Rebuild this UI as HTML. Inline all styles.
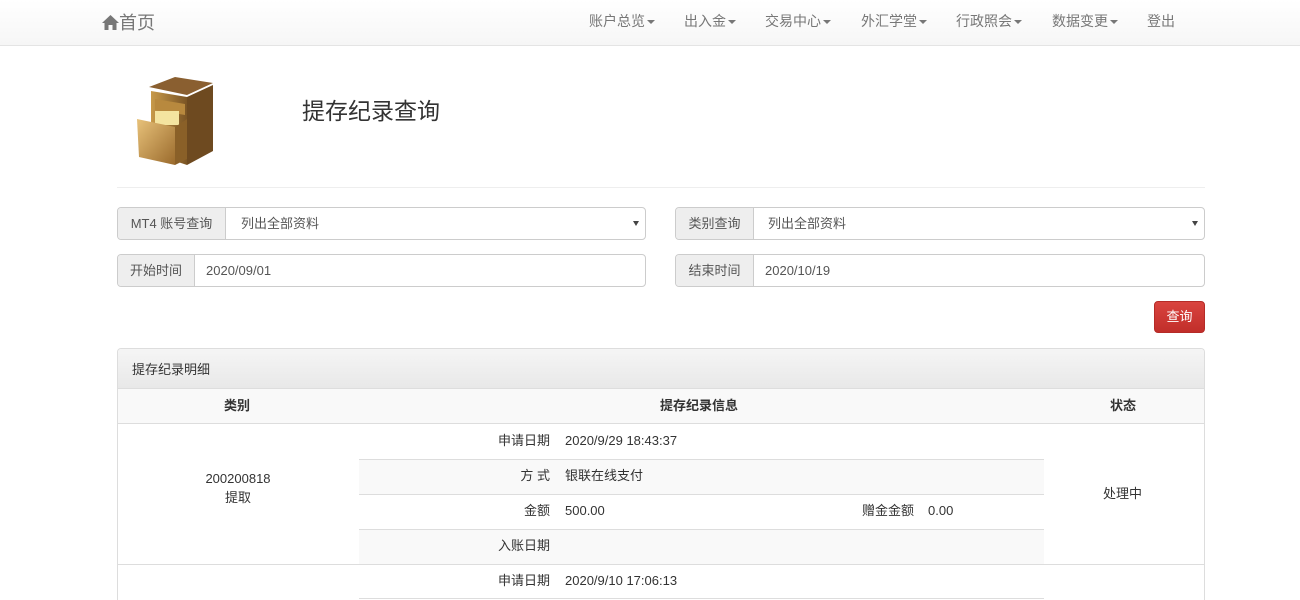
<!DOCTYPE html>
<html style="width:1300px;height:600px;overflow:hidden"><head><meta charset="utf-8"><style>
*{box-sizing:border-box;margin:0;padding:0}
body{width:1300px;height:600px;overflow:hidden;background:#fff;font-family:"Liberation Sans","Noto Sans CJK SC",sans-serif;font-size:13px;color:#333;position:relative}
.a{position:absolute}
.nav{left:0;top:0;width:1300px;height:46px;background:linear-gradient(#fff,#f6f6f6);border-bottom:1px solid #e4e4e4}
.nav span{position:absolute;top:11px;font-size:14px;color:#777;white-space:nowrap}
.car{display:inline-block;width:0;height:0;border-left:4px solid transparent;border-right:4px solid transparent;border-top:4px solid #777;vertical-align:middle;margin-left:2px}
.ig{height:33px;border:1px solid #ccc;border-radius:4px;background:#fff;overflow:hidden}
.ig .ad{position:absolute;left:0;top:0;bottom:0;background:#eee;border-right:1px solid #ccc;color:#555;line-height:31px;text-align:center}
.ig .v{position:absolute;top:0;line-height:31px;color:#555}
.ig .arr{position:absolute;right:6px;top:13px;border-left:3px solid transparent;border-right:3px solid transparent;border-top:5px solid #444}
.bd{border-top:1px solid #ddd}
</style></head><body>
<div class="a nav">
<span style="left:102px;top:9px;font-size:18px;color:#777"><svg width="17" height="15" viewBox="0 0 17 15" style="vertical-align:-1px"><path d="M8.5 0 L17 8 H14.5 V15 H10.5 V10 H6.5 V15 H2.5 V8 H0 Z" fill="#777"/></svg>首页</span>
<span style="left:589px">账户总览<i class="car"></i></span>
<span style="left:684px">出入金<i class="car"></i></span>
<span style="left:765px">交易中心<i class="car"></i></span>
<span style="left:861px">外汇学堂<i class="car"></i></span>
<span style="left:956px">行政照会<i class="car"></i></span>
<span style="left:1052px">数据变更<i class="car"></i></span>
<span style="left:1147px">登出</span>
</div>
<svg class="a" style="left:135px;top:75px" width="82" height="92" viewBox="0 0 82 92">
<defs><linearGradient id="g1" x1="0" x2="1"><stop offset="0" stop-color="#c89a4a"/><stop offset="1" stop-color="#7a5424"/></linearGradient>
<linearGradient id="g2" x1="0" x2="1" y1="0" y2="1"><stop offset="0" stop-color="#e8c27a"/><stop offset="1" stop-color="#9a6a2c"/></linearGradient></defs>
<path d="M14 12 L40 2 L78 8 L52 20 Z" fill="#8a5f30"/>
<path d="M16 16 L52 22 L52 90 L16 78 Z" fill="url(#g1)"/>
<path d="M52 22 L78 10 L78 76 L52 90 Z" fill="#6e4a20"/>
<path d="M20 24 L50 29 L50 40 L20 35 Z" fill="#b8893e"/>
<rect x="20" y="36" width="24" height="14" fill="#f4e4a0"/>
<path d="M2 44 L40 52 L40 90 L4 82 Z" fill="url(#g2)"/>
<path d="M40 52 L52 44 L52 84 L40 90 Z" fill="#8a6028"/>
</svg>
<div class="a" style="left:302px;top:92px;font-size:23px;color:#333">提存纪录查询</div>
<div class="a" style="left:117px;top:187px;width:1088px;height:1px;background:#eee"></div>

<div class="a ig" style="left:117px;top:207px;width:529px"><div class="ad" style="width:108px">MT4 账号查询</div><div class="v" style="left:123px">列出全部资料</div><i class="arr"></i></div>
<div class="a ig" style="left:675px;top:207px;width:530px"><div class="ad" style="width:78px">类别查询</div><div class="v" style="left:92px">列出全部资料</div><i class="arr"></i></div>
<div class="a ig" style="left:117px;top:254px;width:529px"><div class="ad" style="width:77px">开始时间</div><div class="v" style="left:88px">2020/09/01</div></div>
<div class="a ig" style="left:675px;top:254px;width:530px"><div class="ad" style="width:78px">结束时间</div><div class="v" style="left:89px">2020/10/19</div></div>
<div class="a" style="left:1154px;top:301px;width:51px;height:32px;border-radius:4px;background:linear-gradient(#d9443f,#c12e2a);border:1px solid #b52b27;color:#fff;text-align:center;line-height:30px">查询</div>

<div class="a" style="left:117px;top:348px;width:1088px;height:252px;border:1px solid #ddd;border-bottom:none;border-radius:4px 4px 0 0;overflow:hidden">
<div class="a" style="left:0;top:0;width:1088px;height:40px;background:linear-gradient(#f5f5f5,#e8e8e8);border-bottom:1px solid #ddd;padding:10px 14px;color:#333">提存纪录明细</div>
<div class="a" style="left:0;top:40px;width:1088px;height:35px;background:#f9f9f9;border-bottom:1px solid #ddd;font-weight:bold;line-height:33px">
<span class="a" style="left:106px">类别</span><span class="a" style="left:542px">提存纪录信息</span><span class="a" style="left:992px">状态</span></div>
<div class="a" style="left:0;top:120px;width:240px;text-align:center;line-height:19px">200200818<br>提取</div>
<div class="a" style="left:985px;top:134px">处理中</div>
<div class="a" style="left:241px;top:75px;width:685px;height:140px">
<div class="a" style="left:0;top:0;width:685px;height:35px;line-height:33px"><span class="a" style="right:494px">申请日期</span><span class="a" style="left:206px">2020/9/29 18:43:37</span></div>
<div class="a bd" style="left:0;top:35px;width:685px;height:35px;line-height:32px;background:#f9f9f9"><span class="a" style="right:494px">方 式</span><span class="a" style="left:206px">银联在线支付</span></div>
<div class="a bd" style="left:0;top:70px;width:685px;height:35px;line-height:32px"><span class="a" style="right:494px">金额</span><span class="a" style="left:206px">500.00</span><span class="a" style="right:130px">赠金金额</span><span class="a" style="left:569px">0.00</span></div>
<div class="a bd" style="left:0;top:105px;width:685px;height:35px;line-height:32px;background:#f9f9f9"><span class="a" style="right:494px">入账日期</span></div>
</div>
<div class="a bd" style="left:0;top:215px;width:1088px;height:40px"></div>
<div class="a" style="left:241px;top:215px;width:685px;height:35px;line-height:33px;border-bottom:1px solid #ddd"><span class="a" style="right:494px">申请日期</span><span class="a" style="left:206px">2020/9/10 17:06:13</span></div>
</div>
</body></html>
